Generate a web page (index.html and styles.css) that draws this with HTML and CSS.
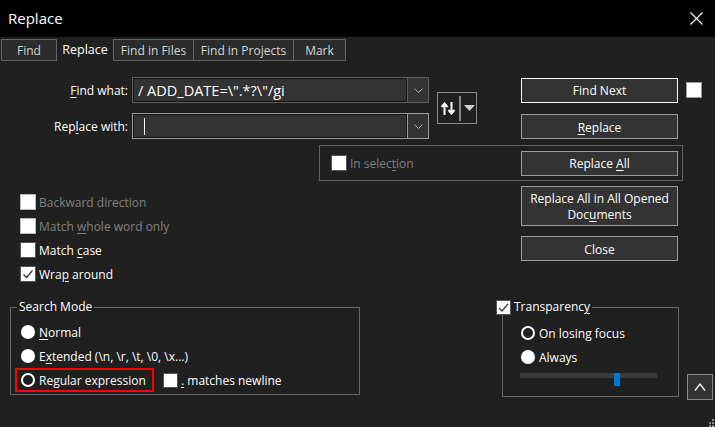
FILE: index.html
```html
<!DOCTYPE html>
<html>
  <head>
    <meta charset="utf-8" />
    <title>Replace</title>
    <link rel="stylesheet" href="styles.css">
  </head>
  <body>
    <div class="dialog">
      <div class="titlebar">
        <span class="title">Replace</span>
        <svg class="close-x" width="13" height="13" viewBox="0 0 13 13">
          <path d="M0.5 0.5 L12.5 12.5 M12.5 0.5 L0.5 12.5" stroke="#fff" stroke-width="1.1" fill="none" />
        </svg>
      </div>

      <!-- 标签页 -->
      <div class="tabs">
        <div class="tab tab-find">Find</div>
        <div class="tab tab-replace active">Replace</div>
        <div class="tab tab-files">Find in Files</div>
        <div class="tab tab-projects">Find in Projects</div>
        <div class="tab tab-mark">Mark</div>
      </div>

      <div class="find-grid">
        <div class="field-label"><u>F</u>ind what:</div>
        <div class="combo">
          <div class="combo-text">/ ADD_DATE=\".*?\"/gi</div>
          <div class="combo-arrow">
            <svg width="9" height="5" viewBox="0 0 9 5"><path d="M0.5 0.5 L4.5 4.5 L8.5 0.5" stroke="#b0b0b0" fill="none" /></svg>
          </div>
        </div>
        <div class="swap-btn">
          <svg class="swap-icon" width="14" height="13" viewBox="0 0 14 13">
            <path d="M3.5 13 V2 M0.5 5 L3.5 1.5 L6.5 5" stroke="#fff" stroke-width="2" fill="none" />
            <path d="M10.5 0 V11 M7.5 8 L10.5 11.5 L13.5 8" stroke="#fff" stroke-width="2" fill="none" />
          </svg>
          <span class="swap-divider"></span>
          <svg width="11" height="6" viewBox="0 0 11 6"><path d="M0 0 H11 L5.5 6 Z" fill="#d0d0d0" /></svg>
        </div>
        <button class="btn btn-default">Find Next</button>
        <div class="square"></div>

        <div class="field-label">Rep<u>l</u>ace with:</div>
        <div class="combo focused">
          <div class="combo-text"><span class="caret"></span></div>
          <div class="combo-arrow">
            <svg width="9" height="5" viewBox="0 0 9 5"><path d="M0.5 0.5 L4.5 4.5 L8.5 0.5" stroke="#b0b0b0" fill="none" /></svg>
          </div>
        </div>
        <button class="btn btn-replace"><u>R</u>eplace</button>
      </div>

      <div class="selection-box">
        <span class="check"></span>
        <span class="option-text disabled">In selec<u>t</u>ion</span>
        <button class="btn btn-all">Replace <u>A</u>ll</button>
      </div>

      <div class="middle">
        <div class="options">
          <div class="option"><span class="check light"></span><span class="option-text disabled">Backward direction</span></div>
          <div class="option"><span class="check light"></span><span class="option-text disabled">Match <u>w</u>hole word only</span></div>
          <div class="option"><span class="check"></span><span class="option-text">Match <u>c</u>ase</span></div>
          <div class="option">
            <span class="check">
              <svg width="14" height="14" viewBox="0 0 14 14"><path d="M2.5 7.5 L5.5 10.5 L11.5 3.5" stroke="#333" stroke-width="1.2" fill="none" /></svg>
            </span>
            <span class="option-text">Wra<u>p</u> around</span>
          </div>
        </div>
        <div class="side-buttons">
          <button class="btn btn-tall">Replace All in All Opened<br>Doc<u>u</u>ments</button>
          <button class="btn">Close</button>
        </div>
      </div>

      <div class="bottom">
        <fieldset class="group search-mode">
          <legend class="legend">Search Mode</legend>
          <div class="group-body">
            <div class="radio-row"><span class="radio"></span><span class="option-text"><u>N</u>ormal</span></div>
            <div class="radio-row"><span class="radio"></span><span class="option-text">E<u>x</u>tended (\n, \r, \t, \0, \x...)</span></div>
            <div class="regex-row">
              <div class="highlight"><span class="radio on"></span><span class="option-text">Regular expression</span></div>
              <div class="option newline"><span class="check"></span><span class="option-text"><u>.</u> matches newline</span></div>
            </div>
          </div>
        </fieldset>

        <fieldset class="group transparency">
          <legend class="legend legend-check">
            <span class="check small">
              <svg width="13" height="13" viewBox="0 0 13 13"><path d="M2 7 L5 10 L11 3" stroke="#333" stroke-width="1.2" fill="none" /></svg>
            </span>
            <span class="option-text">Transparenc<u>y</u></span>
          </legend>
          <div class="group-body">
            <div class="radio-row"><span class="radio on"></span><span class="option-text">On losing focus</span></div>
            <div class="radio-row"><span class="radio"></span><span class="option-text">Always</span></div>
            <div class="slider">
              <div class="track"></div>
              <div class="thumb"></div>
            </div>
          </div>
        </fieldset>

        <button class="btn btn-up">
          <svg width="12" height="8" viewBox="0 0 12 8"><path d="M1 7.5 L6 1 L11 7.5" stroke="#fff" stroke-width="1.3" fill="none" /></svg>
        </button>
      </div>

      <svg class="grip" width="8" height="9" viewBox="0 0 8 9">
        <rect x="5" y="1" width="2" height="2" fill="#888" />
        <rect x="2" y="4" width="2" height="2" fill="#888" />
        <rect x="5" y="4" width="2" height="2" fill="#888" />
        <rect x="2" y="7" width="2" height="2" fill="#888" />
        <rect x="5" y="7" width="2" height="2" fill="#888" />
      </svg>
    </div>
  </body>
</html>
```

FILE: styles.css
```css
* {
  margin: 0;
  padding: 0;
  box-sizing: border-box;
}

body {
  font-family: "Open Sans", "Noto Sans", sans-serif;
  font-size: 12px;
  line-height: 16px;
  color: #fff;
  background-color: #202020;
}

u {
  text-decoration: underline;
  text-underline-offset: 2px;
}

.dialog {
  width: 715px;
  height: 427px;
  position: relative;
  overflow: hidden;
  background-color: #202020;
}

/* 标题栏 */
.titlebar {
  height: 37px;
  background-color: #000;
  display: flex;
  align-items: center;
  justify-content: space-between;
  padding: 0 12px 1px 8px;
}

.title {
  font-size: 15px;
}

/* 标签页 */
.tabs {
  display: flex;
  height: 22px;
  margin: 2px 0 0 1px;
}

.tab {
  height: 22px;
  border: 1px solid #646464;
  background-color: #2b2b2b;
  color: #d6d6d6;
  display: flex;
  align-items: center;
  justify-content: center;
  margin-left: -1px;
  padding-top: 1px;
}

.tab:first-child {
  margin-left: 0;
}

.tab.active {
  border-color: transparent;
  background-color: transparent;
  color: #fff;
  font-size: 12.5px;
  padding: 0 0 1px;
}

.tab-find { width: 56px; }
.tab-replace { width: 58px; }
.tab-files { width: 81px; }
.tab-projects { width: 101px; }
.tab-mark { width: 53px; }

/* 查找/替换输入区 */
.find-grid {
  display: grid;
  grid-template-columns: 132px 297px 92px 157px 24px;
  grid-template-rows: 26px 26px;
  row-gap: 10px;
  align-items: center;
  margin-top: 16px;
}

.field-label {
  text-align: right;
  padding: 2px 4px 0 0;
}

.combo {
  display: flex;
  height: 26px;
}

.combo-text {
  flex: 1;
  display: flex;
  align-items: center;
  padding: 1px 0 0 5px;
  background-color: #333;
  border: 1px solid #5c5c5c;
  box-shadow: inset 0 0 0 1px #141414;
  font-size: 14.5px;
}

.combo-arrow {
  width: 21px;
  display: flex;
  align-items: center;
  justify-content: center;
  background-color: #333;
  border: 1px solid #5c5c5c;
  border-left: none;
}

.combo.focused .combo-text,
.combo.focused .combo-arrow {
  border-color: #9a9a9a;
}

.caret {
  width: 1px;
  height: 17px;
  margin-left: 6px;
  background-color: #fff;
}

.swap-btn {
  grid-column: 3;
  grid-row: 1 / 3;
  width: 40px;
  height: 32px;
  margin-left: 8px;
  border: 1px solid #8a8a8a;
  display: flex;
  align-items: center;
  padding-left: 3px;
}

.swap-divider {
  width: 2px;
  height: 25px;
  margin: 0 3px 0 4px;
  background-color: #8a8a8a;
}

.square {
  width: 16px;
  height: 16px;
  margin-left: 8px;
  background-color: #fff;
  border: 1px solid #999;
}

/* 按钮 */
.btn {
  height: 25px;
  background-color: #333;
  border: 1px solid #9b9b9b;
  color: #fff;
  font: inherit;
  line-height: 16px;
  text-align: center;
  padding-top: 2px;
}

.btn svg {
  display: block;
  margin: 0 auto;
}

.btn-default {
  border-color: #fff;
}

.btn-replace {
  align-self: end;
}

.selection-box {
  display: flex;
  align-items: center;
  width: 364px;
  height: 36px;
  margin: 6px 0 0 319px;
  border: 1px solid #626262;
  padding: 0 4px 0 11px;
}

.btn-all {
  width: 157px;
  margin-left: auto;
}

/* 复选框 */
.check {
  width: 16px;
  height: 16px;
  flex-shrink: 0;
  background-color: #fff;
  border: 1px solid #555;
  display: flex;
  align-items: center;
  justify-content: center;
}

.check.light {
  border-color: #b8b8b8;
}

.check.small {
  width: 15px;
  height: 15px;
}

.option-text {
  margin-left: 3px;
  padding-top: 2px;
  white-space: nowrap;
}

.option-text.disabled {
  color: #808080;
}

.middle {
  display: flex;
  margin-top: 5px;
}

.options {
  width: 521px;
  padding: 8px 0 0 20px;
  display: flex;
  flex-direction: column;
  gap: 8px;
}

.option {
  display: flex;
  align-items: center;
  height: 16px;
}

.side-buttons {
  width: 157px;
  display: flex;
  flex-direction: column;
  gap: 10px;
}

.btn-tall {
  height: 40px;
  padding: 2px 2px 0;
}

/* 底部分组 */
.bottom {
  display: flex;
  align-items: flex-start;
  margin-top: 17px;
}

.group {
  border: 1px solid #666;
  min-width: 0;
}

.legend {
  margin-left: 6px;
  padding: 0 2px;
  line-height: 16px;
}

.search-mode {
  width: 350px;
  margin-left: 10px;
}

.search-mode .group-body {
  padding: 5px 0 2px;
}

.radio-row {
  display: flex;
  align-items: center;
  height: 24px;
  padding-left: 10px;
}

.radio {
  width: 14px;
  height: 14px;
  border-radius: 50%;
  background-color: #fff;
  flex-shrink: 0;
}

.radio.on {
  background-color: #202020;
  border: 2px solid #fff;
}

.radio + .option-text {
  margin-left: 4px;
}

.regex-row {
  display: flex;
  align-items: center;
}

.highlight {
  width: 139px;
  height: 24px;
  margin-left: 4px;
  padding-left: 4px;
  border: 2px solid #f00;
  display: flex;
  align-items: center;
}

.newline {
  margin-left: 9px;
}

.newline .check {
  width: 15px;
  height: 15px;
}

.transparency {
  width: 177px;
  margin-left: 142px;
}

.legend-check {
  display: flex;
  align-items: center;
  margin-left: -7px;
  padding: 0 2px 0 0;
}

.legend-check .option-text {
  padding-top: 0;
}

.transparency .group-body {
  padding: 6px 0 10px 18px;
}

.transparency .radio-row {
  padding-left: 0;
}

.slider {
  position: relative;
  width: 137px;
  height: 13px;
  margin: 2px 0 0 -1px;
}

.track {
  height: 5px;
  margin-top: 4px;
  background-color: #3a3a3a;
}

.thumb {
  position: absolute;
  top: 0;
  left: 94px;
  width: 6px;
  height: 13px;
  background-color: #0078d7;
}

.btn-up {
  width: 26px;
  height: 26px;
  margin: 75px 0 0 8px;
  padding: 0;
  border-color: #8a8a8a;
}

.grip {
  position: absolute;
  right: 0;
  bottom: 0;
}
```
